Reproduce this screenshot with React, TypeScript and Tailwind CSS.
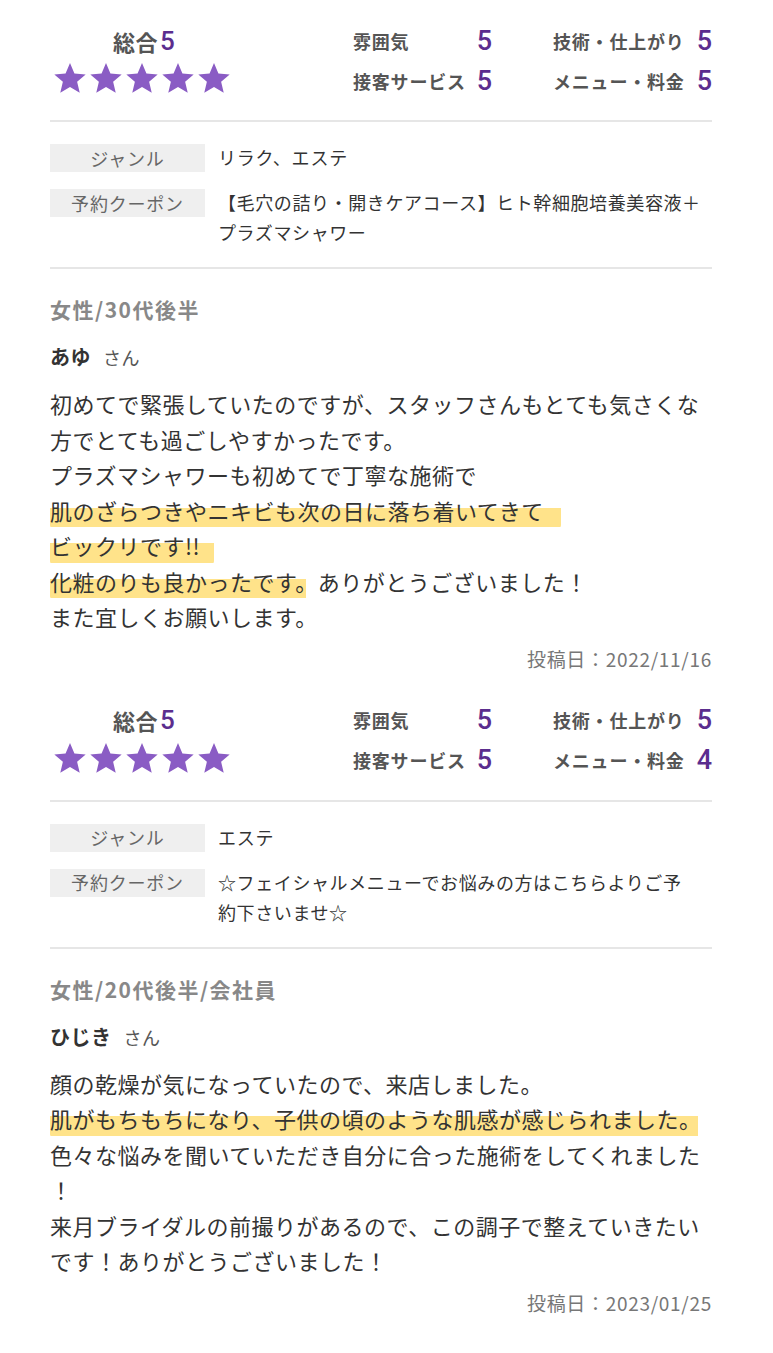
import React from 'react';

interface Line {
  text: string;
  mark?: string;
  pad?: string;
}

interface Review {
  total: number;
  scores: { label: string; value: number }[];
  genre: string;
  coupon: string[];
  profile: string;
  name: string;
  body: Line[];
  date: string;
}

const reviews: Review[] = [
  {
    total: 5,
    scores: [
      { label: '雰囲気', value: 5 },
      { label: '技術・仕上がり', value: 5 },
      { label: '接客サービス', value: 5 },
      { label: 'メニュー・料金', value: 5 },
    ],
    genre: 'リラク、エステ',
    coupon: ['【毛穴の詰り・開きケアコース】ヒト幹細胞培養美容液＋', 'プラズマシャワー'],
    profile: '女性/30代後半',
    name: 'あゆ',
    body: [
      { text: '初めてで緊張していたのですが、スタッフさんもとても気さくな' },
      { text: '方でとても過ごしやすかったです。' },
      { text: 'プラズマシャワーも初めてで丁寧な施術で' },
      { text: '', mark: '肌のざらつきやニキビも次の日に落ち着いてきて', pad: 'pr-[17px]' },
      { text: '', mark: 'ビックリです!!', pad: 'pr-[14px]' },
      { text: 'ありがとうございました！', mark: '化粧のりも良かったです。', pad: 'bg-[length:calc(100%-12px)_100%]' },
      { text: 'また宜しくお願いします。' },
    ],
    date: '投稿日：2022/11/16',
  },
  {
    total: 5,
    scores: [
      { label: '雰囲気', value: 5 },
      { label: '技術・仕上がり', value: 5 },
      { label: '接客サービス', value: 5 },
      { label: 'メニュー・料金', value: 4 },
    ],
    genre: 'エステ',
    coupon: ['☆フェイシャルメニューでお悩みの方はこちらよりご予', '約下さいませ☆'],
    profile: '女性/20代後半/会社員',
    name: 'ひじき',
    body: [
      { text: '顔の乾燥が気になっていたので、来店しました。' },
      { text: '', mark: '肌がもちもちになり、子供の頃のような肌感が感じられました。', pad: 'bg-[length:calc(100%-4px)_100%]' },
      { text: '色々な悩みを聞いていただき自分に合った施術をしてくれました' },
      { text: '！' },
      { text: '来月ブライダルの前撮りがあるので、この調子で整えていきたい' },
      { text: 'です！ありがとうございました！' },
    ],
    date: '投稿日：2023/01/25',
  },
];

function Star() {
  return (
    <svg viewBox="0 0 24 24" className="h-[36px] w-[36px]" fill="#8a5cc4">
      <path d="M12 1.4l2.95 6.95 7.5.62-5.7 4.92 1.73 7.35L12 17.35l-6.48 3.89 1.73-7.35-5.7-4.92 7.5-.62z" />
    </svg>
  );
}

function ReviewBlock({ review }: { review: Review }) {
  return (
    <div>
      {/* Scores */}
      <div className="flex">
        <div className="flex w-[184px] flex-col items-center">
          <div className="flex h-[40px] items-center pl-[4px]">
            <span className="text-[22px] font-bold tracking-[0.5px] text-[#555]">総合</span>
            <span className="ml-[2px] font-['Roboto'] text-[26px] font-medium text-[#5b2d8e]">{review.total}</span>
          </div>
          <div className="flex">
            {Array.from({ length: 5 }).map((_, i) => (
              <Star key={i} />
            ))}
          </div>
        </div>
        <div className="ml-[119px] grid grid-cols-[139px_159px] gap-x-[61px]">
          {review.scores.map((s) => (
            <div key={s.label} className="flex h-[40px] items-center justify-between">
              <span className="text-[18px] font-bold tracking-[0.8px] text-[#555]">{s.label}</span>
              <span className="font-['Roboto'] text-[27px] font-medium text-[#5b2d8e]">{s.value}</span>
            </div>
          ))}
        </div>
      </div>

      <div className="mt-[19px] h-[2px] bg-[#e6e6e6]" />

      {/* Genre / coupon */}
      <div className="mt-[22px] flex items-start">
        <div className="flex h-[28px] w-[155px] items-center justify-center bg-[#efefef] text-[18px] tracking-[0.8px] text-[#666]">
          ジャンル
        </div>
        <div className="ml-[13px] -mt-[2px] text-[18px] leading-[30px] tracking-[0.8px] text-[#333]">{review.genre}</div>
      </div>
      <div className="mt-[17px] flex items-start">
        <div className="flex h-[28px] w-[155px] shrink-0 items-center justify-center bg-[#efefef] text-[18px] tracking-[0.8px] text-[#666]">
          予約クーポン
        </div>
        <div className="ml-[13px] -mt-[2px] text-[18px] leading-[30px] tracking-[0.6px] text-[#333]">
          {review.coupon.map((c) => (
            <div key={c} className="whitespace-nowrap">{c}</div>
          ))}
        </div>
      </div>

      <div className="mt-[20px] h-[2px] bg-[#e6e6e6]" />

      {/* Reviewer */}
      <div className="mt-[25px] text-[21px] font-bold leading-[30px] tracking-[1.5px] text-[#888]">{review.profile}</div>
      <div className="mt-[18px] flex items-baseline leading-[30px]">
        <span className="text-[20px] font-bold tracking-[0.5px] text-[#333]">{review.name}</span>
        <span className="ml-[12px] text-[18px] tracking-[0.5px] text-[#555]">さん</span>
      </div>

      {/* Body */}
      <div className="mt-[14px] text-[22px] leading-[35.5px] tracking-[0.5px] text-[#333]">
        {review.body.map((l, i) => (
          <div key={i} className="whitespace-nowrap">
            {l.mark && (
              <span
                className={`inline-block rounded-[3px] bg-no-repeat bg-[linear-gradient(transparent_42%,#ffe38a_42%,#ffe38a_96%,transparent_96%)] ${l.pad ?? ''}`}
              >
                {l.mark}
              </span>
            )}
            {l.text}
          </div>
        ))}
      </div>

      <div className="mt-[10px] text-right text-[19px] leading-[28px] tracking-[0.7px] text-[#777]">{review.date}</div>
    </div>
  );
}

export default function App() {
  return (
    <div className="min-h-[1353px] bg-white font-['Noto_Sans_CJK_JP','Noto_Sans',sans-serif]">
      <div className="ml-[50px] w-[662px] pt-[21px]">
        {reviews.map((r, i) => (
          <div key={i} className={i > 0 ? 'mt-[28px]' : ''}>
            <ReviewBlock review={r} />
          </div>
        ))}
      </div>
    </div>
  );
}
